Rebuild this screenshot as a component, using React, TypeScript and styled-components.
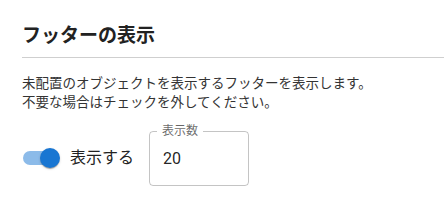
import { useState } from 'react';
import styled, { createGlobalStyle } from 'styled-components';

const GlobalStyle = createGlobalStyle`
  body {
    margin: 0;
    background: #fff;
    font-family: Roboto, "Noto Sans CJK JP", sans-serif;
  }
`;

// whole settings section

const Section = styled.section`
  padding: 22px 0 0 22px;
`;

const Title = styled.h2`
  margin: 0;
  padding-bottom: 7px;
  border-bottom: 1px solid #cfcfcf;
  font-size: 19px;
  line-height: 28px;
  font-weight: 700;
  color: #222;
`;

const Description = styled.p`
  margin: 16px 0 13px;
  font-size: 13.5px;
  line-height: 19px;
  color: #333;
`;

const Row = styled.div`
  display: flex;
  align-items: flex-start;
`;

// switch with its label

const SwitchLabel = styled.label`
  display: flex;
  align-items: center;
  margin-top: 23px;
  margin-right: 15px;
  cursor: pointer;
  font-size: 16px;
  line-height: 20px;
  color: #222;
`;

const HiddenInput = styled.input`
  position: absolute;
  opacity: 0;
  width: 0;
  height: 0;
`;

const SwitchBox = styled.span`
  position: relative;
  display: inline-block;
  width: 38px;
  height: 20px;
  margin: 0 9px 0 1px;
`;

const Track = styled.span<{ $on: boolean }>`
  position: absolute;
  left: 0;
  top: 3px;
  width: 34px;
  height: 14px;
  border-radius: 7px;
  background: ${({ $on }) => ($on ? '#8cbbe9' : '#b8b8b8')};
  transition: background 150ms;
`;

const Thumb = styled.span<{ $on: boolean }>`
  position: absolute;
  top: 0;
  left: ${({ $on }) => ($on ? '17px' : '-3px')};
  width: 20px;
  height: 20px;
  border-radius: 50%;
  background: ${({ $on }) => ($on ? '#1976d2' : '#fafafa')};
  box-shadow: 0 2px 1px -1px rgba(0, 0, 0, 0.2), 0 1px 1px 0 rgba(0, 0, 0, 0.14),
    0 1px 3px 0 rgba(0, 0, 0, 0.12);
  transition: left 150ms;
`;

// outlined number field

const Field = styled.fieldset`
  margin: 0;
  width: 100px;
  box-sizing: border-box;
  padding: 10px 13px 15px;
  border: 1px solid rgba(0, 0, 0, 0.23);
  border-radius: 4px;
  min-width: 0;
`;

const Legend = styled.legend`
  margin-left: -6px;
  padding: 0 5px;
  font-size: 12px;
  line-height: 12px;
  color: rgba(0, 0, 0, 0.6);
`;

const NumberInput = styled.input`
  display: block;
  width: 100%;
  padding: 0;
  border: none;
  outline: none;
  background: transparent;
  font: inherit;
  font-size: 16px;
  line-height: 23px;
  height: 23px;
  color: rgba(0, 0, 0, 0.87);
`;

export default function App() {
  const [shown, setShown] = useState(true);
  const [count, setCount] = useState('20');

  return (
    <>
      <GlobalStyle />
      <Section>
        <Title>フッターの表示</Title>
        <Description>
          未配置のオブジェクトを表示するフッターを表示します。
          <br />
          不要な場合はチェックを外してください。
        </Description>
        <Row>
          <SwitchLabel>
            <HiddenInput
              type="checkbox"
              checked={shown}
              onChange={(e) => setShown(e.target.checked)}
            />
            <SwitchBox>
              <Track $on={shown} />
              <Thumb $on={shown} />
            </SwitchBox>
            表示する
          </SwitchLabel>
          <Field>
            <Legend>表示数</Legend>
            <NumberInput value={count} onChange={(e) => setCount(e.target.value)} />
          </Field>
        </Row>
      </Section>
    </>
  );
}
